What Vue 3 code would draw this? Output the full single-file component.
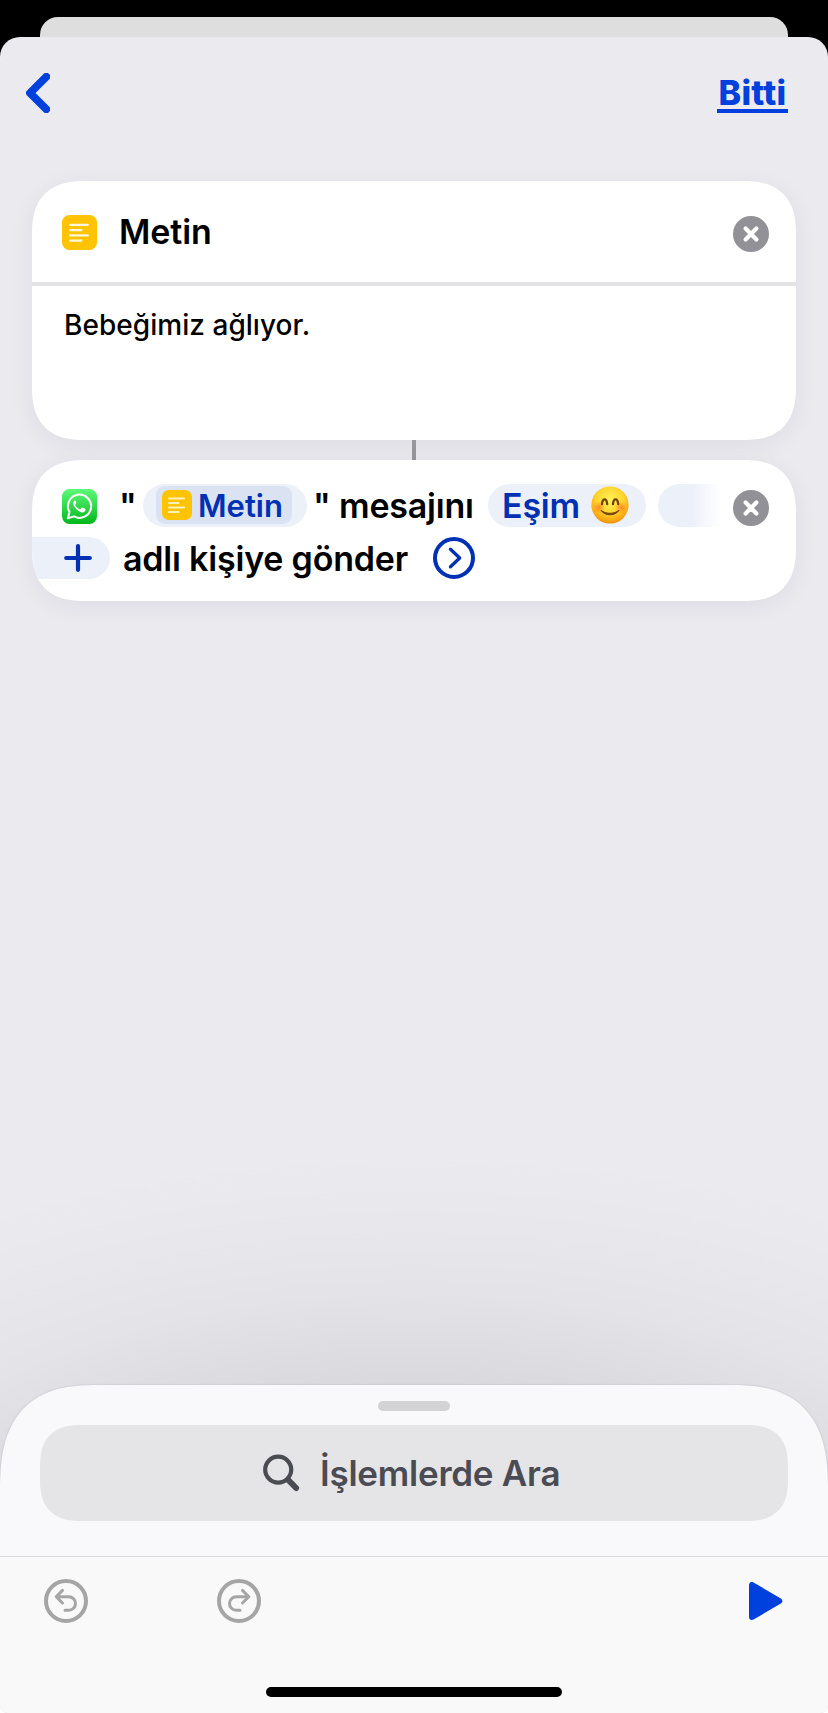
<script setup>
import { ref } from 'vue'

const message = ref('Bebeğimiz ağlıyor.')
const recipient = ref('Eşim')
</script>

<template>
  <div class="screen">
    <div class="back-sheet"></div>

    <main class="sheet">
      <header class="navbar">
        <button class="back" aria-label="Geri">
          <svg width="24" height="40" viewBox="0 0 24 40">
            <path d="M20.3 3.7 4 20l16.3 16.3" fill="none" stroke="#0040dd" stroke-width="7.8" stroke-linecap="round" stroke-linejoin="round" />
          </svg>
        </button>
        <button class="done">Bitti</button>
      </header>

      <section class="card text-card">
        <div class="card-header">
          <svg class="app-icon" viewBox="0 0 35 35">
            <rect width="35" height="35" rx="7.5" fill="#ffc300" />
            <path d="M8.2 9.8h17.6M8.2 15.2h11.2M8.2 20.4h17.6M8.2 25.6h11.2" stroke="#fff8df" stroke-width="2.2" stroke-linecap="round" />
          </svg>
          <h2>Metin</h2>
          <button class="close" aria-label="Sil">
            <svg width="36" height="36" viewBox="0 0 36 36">
              <circle cx="18" cy="18" r="18" fill="#929197" />
              <path d="m12.6 12.6 10.8 10.8m0-10.8L12.6 23.4" stroke="#fff" stroke-width="4.2" stroke-linecap="round" />
            </svg>
          </button>
        </div>
        <p class="message">{{ message }}</p>
      </section>

      <div class="connector"></div>

      <section class="card action-card">
        <div class="line">
          <svg class="app-icon" viewBox="0 0 35 35">
            <defs>
              <linearGradient id="wa" x1="0" y1="0" x2="0" y2="1">
                <stop offset="0" stop-color="#5dfa79" />
                <stop offset="1" stop-color="#04b61d" />
              </linearGradient>
            </defs>
            <rect width="35" height="35" rx="7.5" fill="url(#wa)" />
            <path d="M5.8 29.2 7.5 23A11.6 11.6 0 1 1 12 27.4Z" fill="none" stroke="#fff" stroke-width="2" stroke-linejoin="round" />
            <path d="M13.4 11.5c-.5-.1-1.1.2-1.5.7-1 1.2-1 2.8-.1 4.5 1.7 3.2 4.2 5.4 7.4 6.5 1.8.6 3.8-.2 4.2-2 .2-.8.1-1.1-.4-1.4l-2.5-1.2c-.4-.2-.7-.1-1 .3l-1 1.2c-.2.3-.5.3-.9.1-2-.9-3.3-2.2-4.3-4-.2-.3-.1-.5.1-.8l.8-1c.2-.3.2-.5.1-.8l-1.1-2.4c-.2-.4-.4-.5-.8-.5Z" fill="#fff" />
          </svg>
          <span class="quote open">"</span>
          <span class="pill text-pill">
            <span class="variable">
              <svg class="small-icon" viewBox="0 0 35 35">
                <rect width="35" height="35" rx="8" fill="#ffc300" />
                <path d="M8.2 9.8h17.6M8.2 15.2h11.2M8.2 20.4h17.6M8.2 25.6h11.2" stroke="#fff1bd" stroke-width="2.3" stroke-linecap="round" />
              </svg>
              <span class="variable-name">Metin</span>
            </span>
          </span>
          <span class="quote end">"</span>
          <span class="word">mesajını</span>
          <span class="pill contact">
            <span class="contact-name">{{ recipient }}</span>
            <svg class="emoji" viewBox="0 0 38 38">
              <defs>
                <radialGradient id="face" cx=".5" cy=".36" r=".66">
                  <stop offset="0" stop-color="#fff25b" />
                  <stop offset=".55" stop-color="#ffd52e" />
                  <stop offset=".84" stop-color="#fba810" />
                  <stop offset="1" stop-color="#e78500" />
                </radialGradient>
                <radialGradient id="cheek">
                  <stop offset="0" stop-color="#ff7123" stop-opacity=".75" />
                  <stop offset="1" stop-color="#ff7d20" stop-opacity="0" />
                </radialGradient>
              </defs>
              <circle cx="19" cy="19" r="18.6" fill="url(#face)" />
              <circle cx="8" cy="21.5" r="6.5" fill="url(#cheek)" />
              <circle cx="30" cy="21.5" r="6.5" fill="url(#cheek)" />
              <path d="M11 18.2c.5-6.4 4.6-6.4 5.2 0M22 18.2c.5-6.4 4.6-6.4 5.2 0" fill="none" stroke="#73430c" stroke-width="2.3" stroke-linecap="round" />
              <path d="M10 24.3c4.9 4 13.1 4 18 0-3.5 6-14.5 6-18 0Z" fill="#73430c" stroke="#73430c" stroke-width="1" stroke-linejoin="round" />
            </svg>
          </span>
          <span class="pill-fade"></span>
          <button class="close" aria-label="Sil">
            <svg width="36" height="36" viewBox="0 0 36 36">
              <circle cx="18" cy="18" r="18" fill="#929197" />
              <path d="m12.6 12.6 10.8 10.8m0-10.8L12.6 23.4" stroke="#fff" stroke-width="4.2" stroke-linecap="round" />
            </svg>
          </button>
        </div>
        <div class="line second">
          <button class="add" aria-label="Ekle">
            <svg width="28" height="28" viewBox="0 0 28 28">
              <path d="M14 2.2v23.6M2.2 14h23.6" stroke="#0030b3" stroke-width="4.2" stroke-linecap="round" />
            </svg>
          </button>
          <span class="rest">adlı kişiye gönder</span>
          <svg class="more" width="42" height="42" viewBox="0 0 42 42" fill="none" stroke="#0030b3">
            <circle cx="21" cy="21" r="19" stroke-width="4" />
            <path d="m17.5 12.2 9.2 8.8-9.2 8.8" stroke-width="3.3" stroke-linecap="round" stroke-linejoin="round" />
          </svg>
        </div>
      </section>

      <div class="canvas"></div>

      <section class="drawer">
        <div class="handle"></div>
        <div class="search">
          <svg width="37" height="38" viewBox="0 0 37 38" fill="none" stroke="#4b4b54">
            <circle cx="15.2" cy="15.6" r="13" stroke-width="4.2" />
            <path d="m25.3 26 7.8 8" stroke-width="6" stroke-linecap="round" />
          </svg>
          <span>İşlemlerde Ara</span>
        </div>
      </section>

      <footer class="toolbar">
        <div class="tools">
          <svg width="44" height="44" viewBox="0 0 44 44" fill="none" stroke="#a5a5a5">
            <circle cx="22" cy="22" r="20" stroke-width="4" />
            <path d="m18.5 11.4-6.3 6.4 6.3 6.2M12.5 17.8h12.3a6.7 6.7 0 0 1 0 13.4H21" stroke-width="3" stroke-linecap="round" stroke-linejoin="round" />
          </svg>
          <svg class="redo" width="44" height="44" viewBox="0 0 44 44" fill="none" stroke="#a5a5a5">
            <circle cx="22" cy="22" r="20" stroke-width="4" />
            <path d="m25.5 11.4 6.3 6.4-6.3 6.2M31.5 17.8H19.2a6.7 6.7 0 0 0 0 13.4H23" stroke-width="3" stroke-linecap="round" stroke-linejoin="round" />
          </svg>
          <svg class="play" width="34" height="38" viewBox="0 0 34 38">
            <path d="M3 3v32l27.3-16Z" fill="#0040dd" stroke="#0040dd" stroke-width="6" stroke-linejoin="round" />
          </svg>
        </div>
        <div class="home-indicator"></div>
      </footer>
    </main>
  </div>
</template>

<style>
body {
  margin: 0;
  background: #fff;
}
</style>

<style scoped>
* {
  box-sizing: border-box;
}

.screen {
  width: 828px;
  height: 1713px;
  padding-top: 17px;
  display: flex;
  flex-direction: column;
  background: linear-gradient(#000 120px, #fff 120px);
  color: #000;
  font-family: Inter, "Liberation Sans", sans-serif;
  overflow: hidden;
}

svg {
  display: block;
  flex: none;
}

button {
  padding: 0;
  border: 0;
  background: none;
  font: inherit;
}

.back-sheet {
  flex: none;
  height: 20px;
  margin: 0 40px;
  border-radius: 18px 18px 0 0;
  background: #dedede;
}

.sheet {
  flex: 1;
  display: flex;
  flex-direction: column;
  border-radius: 20px 20px 8px 8px;
  /* wide soft shadow above the drawer */
  background:
    radial-gradient(
      900px 480px at 50% 1583px,
      rgba(0, 0, 0, 0.077) 48%,
      rgba(0, 0, 0, 0.055) 58%,
      rgba(0, 0, 0, 0.032) 68%,
      rgba(0, 0, 0, 0.014) 80%,
      rgba(0, 0, 0, 0.004) 92%,
      transparent
    ),
    #ebeaef;
  overflow: hidden;
}

.navbar {
  flex: none;
  height: 144px;
  padding: 36px 40px 0 26px;
  display: flex;
  align-items: flex-start;
  justify-content: space-between;
}

.done {
  width: 71px;
  height: 40px;
  border-bottom: 4px solid #0040dd;
  color: #0040dd;
  font-size: 34px;
  font-weight: 800;
  font-variant-ligatures: none;
  font-feature-settings: "calt" 0;
  line-height: 40px;
  letter-spacing: 0.3px;
  text-align: center;
  white-space: nowrap;
}

.card {
  flex: none;
  margin: 0 32px;
  border-radius: 42px;
  background: #fff;
  box-shadow: 0 5px 26px rgba(30, 25, 60, 0.06);
}

.text-card {
  height: 259px;
}

.card-header {
  height: 105px;
  padding: 34px 27px 0 30px;
  display: flex;
  align-items: flex-start;
  border-bottom: 4px solid #e3e3e6;
}

.app-icon {
  width: 35px;
  height: 35px;
}

h2 {
  margin: -5px 0 0 22px;
  font-size: 34px;
  font-weight: 600;
  line-height: 43px;
  letter-spacing: -0.1px;
}

.close {
  margin: 1px 0 0 auto;
}

.message {
  margin: 0;
  padding: 22px 32px;
  font-size: 28px;
  font-weight: 500;
  line-height: 35px;
  letter-spacing: 0.04px;
}

.connector {
  flex: none;
  width: 4px;
  height: 20px;
  margin-left: 412px;
  background: #96969b;
}

.action-card {
  height: 141px;
  padding-top: 24px;
  font-size: 34px;
  font-weight: 600;
  line-height: 43px;
  letter-spacing: -0.2px;
  white-space: nowrap;
  overflow: hidden;
}

.line {
  height: 43px;
  padding: 0 27px 0 30px;
  display: flex;
  align-items: center;
}

.line > .app-icon {
  margin-top: 2px;
}

.quote {
  width: 17px;
}

.open {
  margin-left: 22px;
}

.end {
  margin-left: 6px;
}

.pill {
  height: 43px;
  border-radius: 22px;
  display: flex;
  align-items: center;
  background: #ecf0f9;
  color: #0030b3;
}

.text-pill {
  width: 164px;
  margin-left: 7px;
  padding-left: 13px;
}

.variable {
  width: 136px;
  height: 38px;
  margin-top: -1px;
  padding-left: 6px;
  border-radius: 9px;
  display: flex;
  align-items: center;
  background: #dbe3f3;
}

.small-icon {
  width: 30px;
  height: 30px;
}

.variable-name {
  margin-left: 6px;
  font-size: 31px;
  letter-spacing: 0;
}

.word {
  width: 134px;
  margin-left: 9px;
}

.contact {
  width: 158px;
  margin-left: 15px;
  padding-left: 14px;
}

.contact-name {
  width: 77px;
}

.emoji {
  width: 38px;
  height: 38px;
  margin: -1px 0 0 12px;
}

.pill-fade {
  width: 62px;
  height: 43px;
  margin-left: 12px;
  border-radius: 22px 0 0 22px;
  background: linear-gradient(90deg, #ecf0f9 55%, #fff);
}

.line .close {
  margin-top: 5px;
}

.second {
  margin-top: 10px;
  padding: 0;
}

.add {
  width: 78px;
  height: 42px;
  margin-top: -1px;
  padding-left: 32px;
  border-radius: 0 21px 21px 0;
  background: #ecf0f9;
}

.rest {
  width: 286px;
  margin-left: 13px;
}

.more {
  margin: -1px 0 0 24px;
}

.canvas {
  flex: 1;
}

.drawer {
  flex: none;
  height: 171px;
  padding: 16px 40px 0;
  border-radius: 80px 80px 0 0 / 90px 90px 0 0;
  background: #f9f9fb;
  box-shadow: 0 0 2px rgba(40, 30, 60, 0.2);
}

.handle {
  width: 72px;
  height: 10px;
  margin: 0 auto 14px;
  border-radius: 5px;
  background: #d3d3d5;
}

.search {
  height: 96px;
  padding-left: 223px;
  display: flex;
  align-items: center;
  border-radius: 34px;
  background: #e5e5e7;
  color: #4b4b54;
  font-size: 35px;
  font-weight: 600;
  letter-spacing: -0.25px;
  white-space: nowrap;
}

.search span {
  margin-left: 20px;
}

/* continuous corners where the engine has them */
@supports (corner-shape: superellipse(1.3)) {
  .card {
    border-radius: 54px;
    corner-shape: superellipse(1.35);
  }

  .search {
    border-radius: 42px;
    corner-shape: superellipse(1.35);
  }

  .drawer {
    border-radius: 98px 98px 0 0 / 106px 106px 0 0;
    corner-shape: superellipse(1.4);
  }
}

.toolbar {
  flex: none;
  height: 157px;
  padding-top: 22px;
  border-top: 1px solid #dcdcde;
  background: #f9f9f9;
}

.tools {
  height: 44px;
  padding: 0 45px 0 44px;
  display: flex;
  align-items: center;
}

.redo {
  margin-left: 129px;
}

.play {
  margin-left: auto;
}

.home-indicator {
  width: 296px;
  height: 10px;
  margin: 64px auto 0;
  border-radius: 5px;
  background: #000;
}
</style>
